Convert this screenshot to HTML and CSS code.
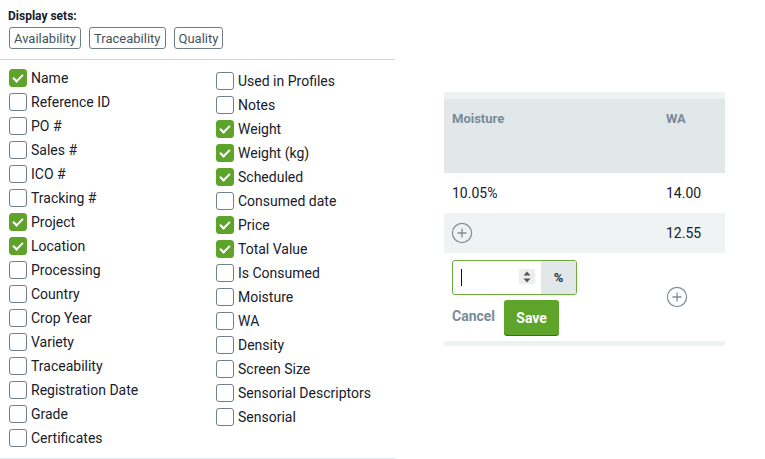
FILE: index.html
```html
<!DOCTYPE html>
<html lang="en">
<head>
    <meta charset="UTF-8">
    <title>Display sets</title>
    <link rel="stylesheet" href="styles.css">
</head>
<body>
<div class="page">
    <!-- Column picker -->
    <div class="picker">
        <div class="sets">
            <div class="sets-title">Display sets:</div>
            <div class="sets-buttons">
                <button class="set-btn">Availability</button>
                <button class="set-btn">Traceability</button>
                <button class="set-btn">Quality</button>
            </div>
        </div>
        <div class="fields">
            <div class="col col-left">
                <label class="field checked"><span class="box"></span>Name</label>
                <label class="field"><span class="box"></span>Reference ID</label>
                <label class="field"><span class="box"></span>PO #</label>
                <label class="field"><span class="box"></span>Sales #</label>
                <label class="field"><span class="box"></span>ICO #</label>
                <label class="field"><span class="box"></span>Tracking #</label>
                <label class="field checked"><span class="box"></span>Project</label>
                <label class="field checked"><span class="box"></span>Location</label>
                <label class="field"><span class="box"></span>Processing</label>
                <label class="field"><span class="box"></span>Country</label>
                <label class="field"><span class="box"></span>Crop Year</label>
                <label class="field"><span class="box"></span>Variety</label>
                <label class="field"><span class="box"></span>Traceability</label>
                <label class="field"><span class="box"></span>Registration Date</label>
                <label class="field"><span class="box"></span>Grade</label>
                <label class="field"><span class="box"></span>Certificates</label>
            </div>
            <div class="col col-right">
                <label class="field"><span class="box"></span>Used in Profiles</label>
                <label class="field"><span class="box"></span>Notes</label>
                <label class="field checked"><span class="box"></span>Weight</label>
                <label class="field checked"><span class="box"></span>Weight (kg)</label>
                <label class="field checked"><span class="box"></span>Scheduled</label>
                <label class="field"><span class="box"></span>Consumed date</label>
                <label class="field checked"><span class="box"></span>Price</label>
                <label class="field checked"><span class="box"></span>Total Value</label>
                <label class="field"><span class="box"></span>Is Consumed</label>
                <label class="field"><span class="box"></span>Moisture</label>
                <label class="field"><span class="box"></span>WA</label>
                <label class="field"><span class="box"></span>Density</label>
                <label class="field"><span class="box"></span>Screen Size</label>
                <label class="field"><span class="box"></span>Sensorial Descriptors</label>
                <label class="field"><span class="box"></span>Sensorial</label>
            </div>
        </div>
    </div>

    <!-- Table -->
    <div class="grid">
        <div class="strip"></div>
        <div class="row head">
            <div class="cell">Moisture</div>
            <div class="cell">WA</div>
        </div>
        <div class="row">
            <div class="cell">10.05%</div>
            <div class="cell">14.00</div>
        </div>
        <div class="row alt">
            <div class="cell">
                <svg class="plus" width="22" height="22" viewBox="0 0 22 22"><circle cx="11" cy="11" r="9.6" fill="none" stroke="#7d8e9b" stroke-width="1.2"/><path d="M11 6.5v9M6.5 11h9" stroke="#7d8e9b" stroke-width="1.3"/></svg>
            </div>
            <div class="cell">12.55</div>
        </div>
        <div class="row edit">
            <div class="cell">
                <div class="input-group">
                    <div class="input"><span class="caret"></span></div>
                    <div class="spin">
                        <svg width="10" height="14" viewBox="0 0 10 14"><path d="M5 1.5L8.5 5.5H1.5Z M5 12.5L8.5 8.5H1.5Z" fill="#555"/></svg>
                    </div>
                    <div class="unit">%</div>
                </div>
                <div class="actions">
                    <span class="cancel">Cancel</span>
                    <button class="save">Save</button>
                </div>
            </div>
            <div class="cell mid">
                <svg class="plus" width="22" height="22" viewBox="0 0 22 22"><circle cx="11" cy="11" r="9.6" fill="none" stroke="#7d8e9b" stroke-width="1.2"/><path d="M11 6.5v9M6.5 11h9" stroke="#7d8e9b" stroke-width="1.3"/></svg>
            </div>
        </div>
        <div class="strip bottom"></div>
    </div>
</div>
</body>
</html>
```

FILE: styles.css
```css
body {
    margin: 0;
    padding: 0;
    font-family: Roboto, "Liberation Sans", sans-serif;
    color: #17202b;
    background: #fff;
}

.page {
    display: flex;
    align-items: flex-start;
}

.picker {
    width: 395px;
    border-bottom: 1px solid #e4e8eb;
}

.sets {
    padding: 8px 0 10px 8px;
    border-bottom: 1px solid #cdd4d9;
}

.sets-title {
    font-size: 12px;
    font-weight: bold;
    line-height: 16px;
}

.sets-buttons {
    display: flex;
    gap: 8px;
    margin-top: 3px;
    padding-left: 1px;
}

.set-btn {
    font-family: inherit;
    font-size: 13px;
    color: #46525c;
    background: #fff;
    border: 1px solid #6e7d88;
    border-radius: 3px;
    height: 22px;
    padding: 0 4px;
}

.fields {
    display: flex;
    padding-bottom: 8px;
}

.col {
    display: flex;
    flex-direction: column;
}

.col-left {
    width: 207px;
    padding: 6px 0 0 9px;
}

.col-right {
    padding-top: 9px;
}

.field {
    display: flex;
    align-items: center;
    gap: 4px;
    height: 24px;
    font-size: 14px;
}

.box {
    width: 18px;
    height: 18px;
    box-sizing: border-box;
    border: 1.5px solid #6f808c;
    border-radius: 3px;
    background: #fff;
    position: relative;
}

.checked .box {
    background: #5fa42a;
    border-color: #5fa42a;
}

.checked .box::after {
    content: "";
    position: absolute;
    left: 4.5px;
    top: 2px;
    width: 4px;
    height: 8px;
    border: solid #fff;
    border-width: 0 2px 2px 0;
    transform: rotate(45deg);
}

/* table */
.grid {
    width: 281px;
    margin: 92px 0 0 49px;
}

.strip {
    height: 7px;
    background: #eef2f3;
}

.strip.bottom {
    height: 5px;
}

.row {
    display: grid;
    grid-template-columns: 214px 67px;
    height: 40px;
    font-size: 14px;
}

.row .cell {
    padding: 0 8px;
    display: flex;
    align-items: center;
}

.row.head {
    height: 74px;
    background: #e2e7ea;
    font-size: 13px;
    font-weight: bold;
    color: #7a8b98;
}

.row.head .cell {
    align-items: flex-start;
    padding-top: 12px;
}

.row.alt {
    background: #eff3f4;
}

.plus {
    display: block;
}

.alt .plus {
    margin-left: -1px;
}

.row.edit {
    height: 88px;
}

.row.edit .cell {
    flex-direction: column;
    align-items: flex-start;
    justify-content: flex-start;
    padding-top: 7px;
}

.row.edit .cell.mid {
    justify-content: center;
    padding: 0 0 0 8px;
}

.input-group {
    display: flex;
    width: 125px;
    height: 35px;
    box-sizing: border-box;
    border: 1.5px solid #6aab3a;
    border-radius: 3px;
    overflow: hidden;
}

.input {
    flex: 1;
    display: flex;
    align-items: center;
    padding-left: 8px;
}

.caret {
    width: 1px;
    height: 17px;
    background: #111;
}

.spin {
    width: 16px;
    height: 15px;
    margin: 8px 6px 0 0;
    background: #eeeeee;
    display: flex;
    align-items: center;
    justify-content: center;
}

.unit {
    width: 35px;
    background: #e2e7ea;
    display: flex;
    align-items: center;
    justify-content: center;
    font-size: 13px;
    font-weight: bold;
    color: #2a3440;
}

.actions {
    display: flex;
    align-items: center;
    gap: 9px;
    margin-top: 5px;
}

.cancel {
    font-size: 14px;
    font-weight: bold;
    color: #7a8b98;
    margin-top: -3px;
}

.save {
    font-family: inherit;
    font-size: 14px;
    font-weight: bold;
    color: #fff;
    background: #5fa42a;
    border: none;
    border-radius: 3px;
    width: 55px;
    height: 35px;
    box-shadow: 0 1px 0 #3c6a1a;
}
```
